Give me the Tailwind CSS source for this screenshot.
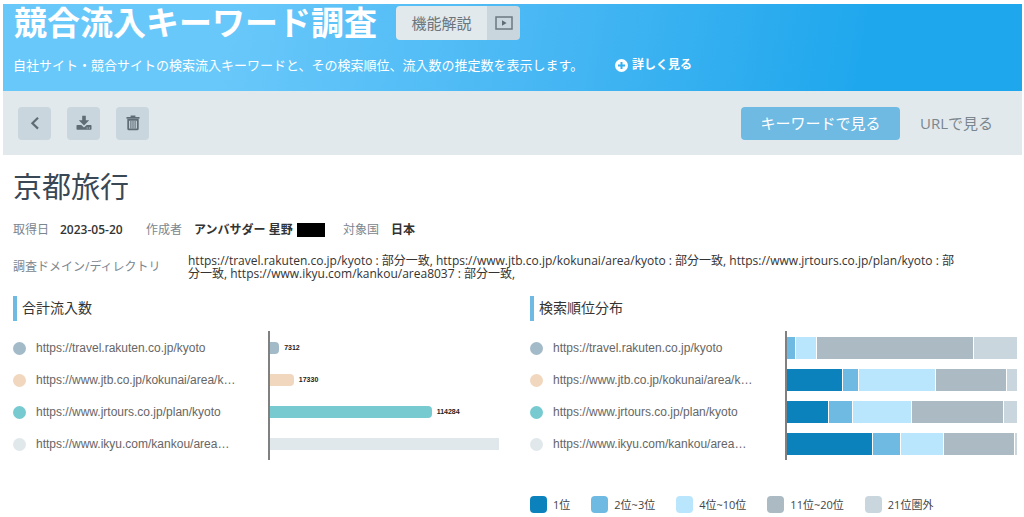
<!DOCTYPE html>
<html lang="ja">
<head>
<meta charset="utf-8">
<meta name="viewport" content="width=device-width, initial-scale=1">
<title>競合流入キーワード調査</title>
<script src="https://cdn.jsdelivr.net/npm/@tailwindcss/browser@4"></script>
</head>
<body class="overflow-x-hidden bg-white font-['Open_Sans','Noto_Sans_CJK_JP',sans-serif] text-[#333]">
<div class="mt-1 ml-[3px] mr-[2px]">
  <header class="h-[87px] bg-[linear-gradient(100deg,#69c8fa_22%,#45b6f3_55%,#1fa7ed_84%)] text-white">
    <div class="flex items-start gap-4 pl-[11px]">
      <h1 class="h-[38px] w-[366px] whitespace-nowrap text-[33px] leading-[38px] font-bold">競合流入キーワード調査</h1>
      <button type="button" class="mt-[2px] flex h-[34px] overflow-hidden rounded text-[15px] text-[#6c757c]">
        <span class="flex w-[91px] items-center justify-center self-stretch bg-[#e1e9ec]">機能解説</span>
        <span class="flex w-[33px] items-center justify-center self-stretch bg-[#c9d6dd]">
          <svg class="h-[14px] w-[18px]" viewBox="0 0 18 14" fill="none"><rect x="1" y="1" width="16" height="12" stroke="#6b7881" stroke-width="1.5"/><path d="M7 4.2v5.6l4.6-2.8z" fill="#5f6c75"/></svg>
        </span>
      </button>
    </div>
    <div class="mt-[13px] flex h-5 items-center whitespace-nowrap pl-[10px] text-[13px] leading-5">
      <p class="w-[602px]">自社サイト・競合サイトの検索流入キーワードと、その検索順位、流入数の推定数を表示します。</p>
      <a href="#" class="flex items-center gap-1 text-xs font-bold leading-5">
        <svg class="size-[13px]" viewBox="0 0 13 13"><circle cx="6.5" cy="6.5" r="6.5" fill="#fff"/><path d="M6.5 3v7M3 6.5h7" stroke="#35aff0" stroke-width="2"/></svg>
        詳しく見る
      </a>
    </div>
  </header>

  <nav class="flex h-16 items-center justify-between bg-[#e1e9ec] pr-[29px] pl-[15px] text-[15px] text-[#7b868e]">
    <div class="flex gap-4">
      <button type="button" aria-label="戻る" class="flex size-[33px] items-center justify-center rounded bg-[#c9d6dd]">
        <svg class="size-4" viewBox="0 0 16 16" fill="none"><path d="M11 2.8 5.4 8.2l5.6 5.4" stroke="#5f6c75" stroke-width="2.2"/></svg>
      </button>
      <button type="button" aria-label="ダウンロード" class="flex size-[33px] items-center justify-center rounded bg-[#c9d6dd]">
        <svg class="size-4" viewBox="0 0 16 16" fill="#5f6c75"><path d="M6.2.8h3.6v4.4h3.4L8 10.4 2.8 5.2h3.4z"/><path fill-rule="evenodd" d="M1.2 10h4.1L8 12.4 10.7 10h4.1q.7 0 .7.7v3.3q0 .7-.7.7H1.2q-.7 0-.7-.7v-3.3q0-.7.7-.7zM10.6 12.6v1h1v-1zM12.9 12.6v1h1v-1z"/></svg>
      </button>
      <button type="button" aria-label="削除" class="flex size-[33px] items-center justify-center rounded bg-[#c9d6dd]">
        <svg class="size-4" viewBox="0 0 16 16" fill="none" stroke="#5f6c75"><path d="M1.5 2.8h13M5.6 1.3h4.8" stroke-width="1.8"/><path d="M3.2 4.8h9.6v8.9q0 .7-.7.7H3.9q-.7 0-.7-.7z" stroke-width="1.8"/><path d="M5.9 6v7.5M8 6v7.5M10.1 6v7.5" stroke-width="1.1"/></svg>
      </button>
    </div>
    <div class="flex items-center gap-5">
      <button type="button" class="h-[33px] w-[159px] rounded bg-[#6fbae3] text-white">キーワードで見る</button>
      <button type="button" class="h-[33px]">URLで見る</button>
    </div>
  </nav>

  <main class="pl-[10px] pr-[5px]">
    <h2 class="mt-3 text-[29px] leading-10 text-[#3a4754]">京都旅行</h2>

    <dl class="mt-[13px] flex h-5 items-center text-[12px] leading-5 whitespace-nowrap">
      <dt class="w-[47px] text-[#7b868e]">取得日</dt>
      <dd class="w-[86px] font-semibold">2023-05-20</dd>
      <dt class="w-12 text-[#7b868e]">作成者</dt>
      <dd class="flex w-[149px] items-center font-bold">アンバサダー 星野<span class="ml-1 h-[14px] w-7 bg-black"></span></dd>
      <dt class="w-12 text-[#7b868e]">対象国</dt>
      <dd class="font-bold">日本</dd>
    </dl>

    <dl class="mt-[13px] flex h-[27px] items-center">
      <dt class="w-[175px] shrink-0 text-xs text-[#7b868e]">調査ドメイン/ディレクトリ</dt>
      <dd class="pr-14 text-xs leading-[13px]">https://travel.rakuten.co.jp/kyoto : 部分一致, https://www.jtb.co.jp/kokunai/area/kyoto : 部分一致, https://www.jrtours.co.jp/plan/kyoto : 部分一致, https://www.ikyu.com/kankou/area8037 : 部分一致,</dd>
    </dl>

    <div class="mt-4 grid grid-cols-[517fr_487fr]">
      <section class="pr-[31px]">
        <h3 class="h-[25px] border-l-4 border-[#6fbae3] pl-[5px] text-sm leading-6">合計流入数</h3>
        <div class="mt-[10px] flex text-xs whitespace-nowrap text-[#666]">
          <ul class="w-[255px] shrink-0 pt-px font-['Liberation_Sans',sans-serif]">
            <li class="flex h-8 items-center gap-[10px]"><span class="size-[13px] rounded-full bg-[#a3bac9]"></span>https://travel.rakuten.co.jp/kyoto</li>
            <li class="flex h-8 items-center gap-[10px]"><span class="size-[13px] rounded-full bg-[#f0d7be]"></span>https://www.jtb.co.jp/kokunai/area/k…</li>
            <li class="flex h-8 items-center gap-[10px]"><span class="size-[13px] rounded-full bg-[#77cad0]"></span>https://www.jrtours.co.jp/plan/kyoto</li>
            <li class="flex h-8 items-center gap-[10px]"><span class="size-[13px] rounded-full bg-[#e1e8ec]"></span>https://www.ikyu.com/kankou/area…</li>
          </ul>
          <div class="min-w-0 flex-1 border-l-2 border-[#808080] pt-px font-['Liberation_Sans',sans-serif] text-[7px] font-bold text-[#222]">
            <div class="flex h-8 items-center gap-[5px]"><span class="h-3 rounded-r bg-[#a3bac9]" style="width:4%"></span>7312</div>
            <div class="flex h-8 items-center gap-[5px]"><span class="h-3 rounded-r bg-[#f0d7be]" style="width:10.4%"></span>17330</div>
            <div class="flex h-8 items-center gap-[5px]"><span class="h-3 rounded-r bg-[#77cad0]" style="width:70.6%"></span>114284</div>
            <div class="flex h-8 items-center"><span class="h-3 bg-[#e1e8ec]" style="width:100%"></span></div>
          </div>
        </div>
      </section>

      <section>
        <h3 class="h-[25px] border-l-4 border-[#6fbae3] pl-[5px] text-sm leading-6">検索順位分布</h3>
        <div class="mt-[10px] flex text-xs whitespace-nowrap text-[#666]">
          <ul class="w-[255px] shrink-0 pt-px font-['Liberation_Sans',sans-serif]">
            <li class="flex h-8 items-center gap-[10px]"><span class="size-[13px] rounded-full bg-[#a3bac9]"></span>https://travel.rakuten.co.jp/kyoto</li>
            <li class="flex h-8 items-center gap-[10px]"><span class="size-[13px] rounded-full bg-[#f0d7be]"></span>https://www.jtb.co.jp/kokunai/area/k…</li>
            <li class="flex h-8 items-center gap-[10px]"><span class="size-[13px] rounded-full bg-[#77cad0]"></span>https://www.jrtours.co.jp/plan/kyoto</li>
            <li class="flex h-8 items-center gap-[10px]"><span class="size-[13px] rounded-full bg-[#e1e8ec]"></span>https://www.ikyu.com/kankou/area…</li>
          </ul>
          <div class="min-w-0 flex-1 border-l-2 border-[#808080] pt-px">
            <div class="flex h-8 py-[5px]">
              <span class="border-r border-white bg-[#6fbae3]" style="width:4%"></span>
              <span class="border-r border-white bg-[#b9e6fd]" style="width:9%"></span>
              <span class="border-r border-white bg-[#abbac3]" style="width:68.2%"></span>
              <span class="bg-[#c9d6dd]" style="width:18.8%"></span>
            </div>
            <div class="flex h-8 py-[5px]">
              <span class="border-r border-white bg-[#0c82bd]" style="width:24.5%"></span>
              <span class="border-r border-white bg-[#6fbae3]" style="width:6.8%"></span>
              <span class="border-r border-white bg-[#b9e6fd]" style="width:33.3%"></span>
              <span class="border-r border-white bg-[#abbac3]" style="width:31.2%"></span>
              <span class="bg-[#c9d6dd]" style="width:4.2%"></span>
            </div>
            <div class="flex h-8 py-[5px]">
              <span class="border-r border-white bg-[#0c82bd]" style="width:18.1%"></span>
              <span class="border-r border-white bg-[#6fbae3]" style="width:10.4%"></span>
              <span class="border-r border-white bg-[#b9e6fd]" style="width:25.7%"></span>
              <span class="border-r border-white bg-[#abbac3]" style="width:40.2%"></span>
              <span class="bg-[#c9d6dd]" style="width:5.6%"></span>
            </div>
            <div class="flex h-8 py-[5px]">
              <span class="border-r border-white bg-[#0c82bd]" style="width:37.4%"></span>
              <span class="border-r border-white bg-[#6fbae3]" style="width:12%"></span>
              <span class="border-r border-white bg-[#b9e6fd]" style="width:18.9%"></span>
              <span class="border-r border-white bg-[#abbac3]" style="width:31%"></span>
              <span class="bg-[#c9d6dd]" style="width:0.7%"></span>
            </div>
          </div>
        </div>
        <ul class="mt-9 flex gap-[21px] text-[11px] leading-[17px] whitespace-nowrap text-[#444]">
          <li class="flex gap-[6px]"><span class="size-[17px] rounded bg-[#0c82bd]"></span>1位</li>
          <li class="flex gap-[6px]"><span class="size-[17px] rounded bg-[#6fbae3]"></span>2位~3位</li>
          <li class="flex gap-[6px]"><span class="size-[17px] rounded bg-[#b9e6fd]"></span>4位~10位</li>
          <li class="flex gap-[6px]"><span class="size-[17px] rounded bg-[#abbac3]"></span>11位~20位</li>
          <li class="flex gap-[6px]"><span class="size-[17px] rounded bg-[#c9d6dd]"></span>21位圏外</li>
        </ul>
      </section>
    </div>
  </main>
</div>
</body>
</html>
